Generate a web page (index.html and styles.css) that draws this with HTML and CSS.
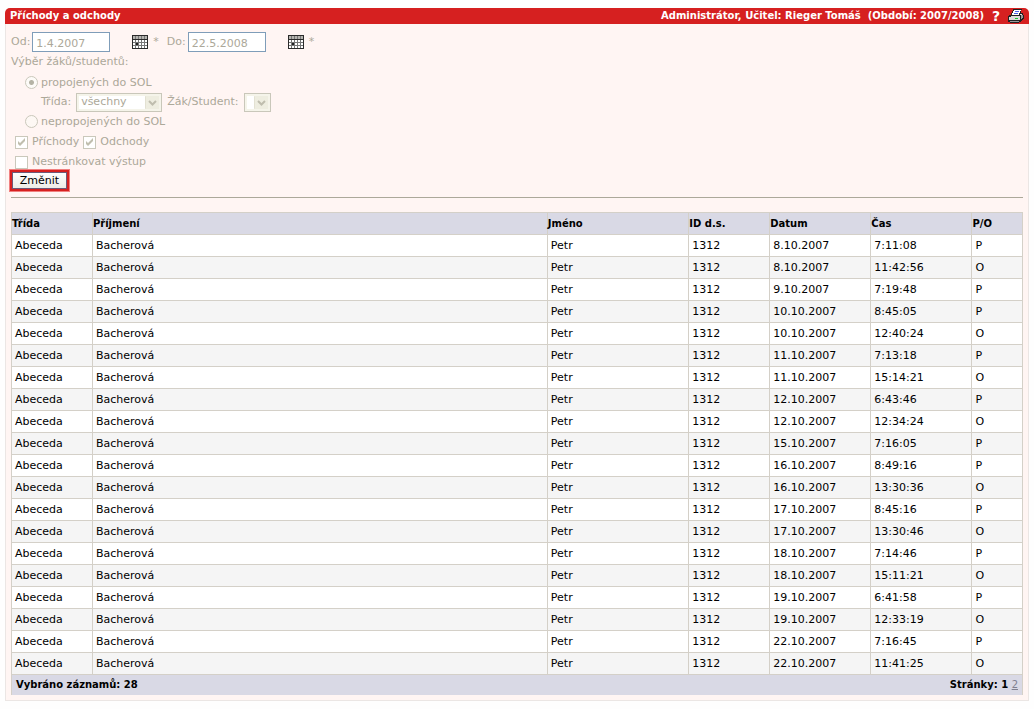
FILE: index.html
```html
<!DOCTYPE html>
<html lang="cs">
<head>
<meta charset="utf-8">
<title>Příchody a odchody</title>
<link rel="stylesheet" href="styles.css">
</head>
<body>
<main class="panel">
  <header class="bar">
    <h1 class="bar-title">Příchody a odchody</h1>
    <span>Administrátor, Učitel: Rieger Tomáš&nbsp; (Období: 2007/2008)</span>
    <button type="button" class="icon-button help" aria-label="Nápověda">?</button>
    <button type="button" class="icon-button" aria-label="Tisk">
      <svg width="16" height="14" viewBox="0 0 16 14" shape-rendering="crispEdges">
        <path d="M5 0h9v1h-1v3h2v2h1v4h-1v1h-1v1h-1v1h-2v1H2v-1H0V7h1V6h2V4h1V2h1z" fill="#222"/>
        <path d="M6 1h7v1h-1v2h-1v2H4V4h1V2h1z" fill="#fff"/>
        <path d="M7 2h4v1H7zM6 4h4v1H6z" fill="#4a62e8"/>
        <path d="M3 7h9v1H3zM1 8h11v3H1zM12 5h2v1h-2z" fill="#dcdcdc"/>
        <path d="M13 6h2v3h-1v1h-1zM2 12h9v1H2z" fill="#999"/>
        <path d="M7 9h3v1H7z" fill="#12d030"/>
      </svg>
    </button>
  </header>
  <div class="content">
    <form class="filter">
      <div class="line dates">
        <label for="from">Od:</label>
        <input class="date" id="from" type="text" value="1.4.2007" disabled>
        <button type="button" class="calendar" aria-label="Kalendář od" disabled>
          <svg width="16" height="14" viewBox="0 0 16 14" shape-rendering="crispEdges">
            <path d="M0 0h16v14H0z" fill="#2b2b2b"/>
            <path d="M1 1h14v3H1z" fill="#b5b5b0"/>
            <path d="M1 5h2v2H1zM4 5h2v2H4zM7 5h2v2H7zM10 5h2v2h-2zM13 5h2v2h-2zM1 8h2v2H1zM7 8h2v2H7zM10 8h2v2h-2zM13 8h2v2h-2zM1 11h2v2H1zM4 11h2v2H4zM7 11h2v2H7zM10 11h2v2h-2zM13 11h2v2h-2z" fill="#fff"/>
            <path d="M3 1h1v3H3zM6 1h1v3H6zM9 1h1v3H9zM12 1h1v3h-1z" fill="#777"/>
            <path d="M3 5h1v8H3zM6 5h1v8H6zM9 5h1v8H9zM12 5h1v8h-1zM1 7h14v1H1zM1 10h14v1H1z" fill="#777"/>
            <path d="M4 8h2v2H4z" fill="#222"/>
          </svg>
        </button>
        <span class="required">*</span>
        <label for="to">Do:</label>
        <input class="date" id="to" type="text" value="22.5.2008" disabled>
        <button type="button" class="calendar" aria-label="Kalendář do" disabled>
          <svg width="16" height="14" viewBox="0 0 16 14" shape-rendering="crispEdges">
            <path d="M0 0h16v14H0z" fill="#2b2b2b"/>
            <path d="M1 1h14v3H1z" fill="#b5b5b0"/>
            <path d="M1 5h2v2H1zM4 5h2v2H4zM7 5h2v2H7zM10 5h2v2h-2zM13 5h2v2h-2zM1 8h2v2H1zM7 8h2v2H7zM10 8h2v2h-2zM13 8h2v2h-2zM1 11h2v2H1zM4 11h2v2H4zM7 11h2v2H7zM10 11h2v2h-2zM13 11h2v2h-2z" fill="#fff"/>
            <path d="M3 1h1v3H3zM6 1h1v3H6zM9 1h1v3H9zM12 1h1v3h-1z" fill="#777"/>
            <path d="M3 5h1v8H3zM6 5h1v8H6zM9 5h1v8H9zM12 5h1v8h-1zM1 7h14v1H1zM1 10h14v1H1z" fill="#777"/>
            <path d="M4 8h2v2H4z" fill="#222"/>
          </svg>
        </button>
        <span class="required">*</span>
      </div>
      <div class="line">Výběr žáků/studentů:</div>
      <div class="line nested">
        <input class="radio" id="linked" type="radio" name="link" checked disabled>
        <label for="linked">propojených do SOL</label>
      </div>
      <div class="line selects">
        <label for="class">Třída:</label>
        <select class="drop wide" id="class" disabled><option>všechny</option></select>
        <label for="student">Žák/Student:</label>
        <select class="drop narrow" id="student" disabled><option></option></select>
      </div>
      <div class="line nested">
        <input class="radio" id="unlinked" type="radio" name="link" disabled>
        <label for="unlinked">nepropojených do SOL</label>
      </div>
      <div class="line checks">
        <input class="check" id="arrivals" type="checkbox" checked disabled>
        <label for="arrivals">Příchody</label>
        <input class="check" id="departures" type="checkbox" checked disabled>
        <label for="departures">Odchody</label>
      </div>
      <div class="line checks">
        <input class="check" id="nopaging" type="checkbox" disabled>
        <label for="nopaging">Nestránkovat výstup</label>
      </div>
      <button class="change" type="button">Změnit</button>
    </form>
    <table class="records">
      <colgroup><col class="c-class"><col class="c-surname"><col class="c-name"><col class="c-id"><col class="c-date"><col class="c-time"><col class="c-dir"></colgroup>
      <thead><tr><th>Třída</th><th>Příjmení</th><th>Jméno</th><th>ID d.s.</th><th>Datum</th><th>Čas</th><th>P/O</th></tr></thead>
      <tbody>
        <tr><td>Abeceda</td><td>Bacherová</td><td>Petr</td><td>1312</td><td>8.10.2007</td><td>7:11:08</td><td>P</td></tr>
        <tr><td>Abeceda</td><td>Bacherová</td><td>Petr</td><td>1312</td><td>8.10.2007</td><td>11:42:56</td><td>O</td></tr>
        <tr><td>Abeceda</td><td>Bacherová</td><td>Petr</td><td>1312</td><td>9.10.2007</td><td>7:19:48</td><td>P</td></tr>
        <tr><td>Abeceda</td><td>Bacherová</td><td>Petr</td><td>1312</td><td>10.10.2007</td><td>8:45:05</td><td>P</td></tr>
        <tr><td>Abeceda</td><td>Bacherová</td><td>Petr</td><td>1312</td><td>10.10.2007</td><td>12:40:24</td><td>O</td></tr>
        <tr><td>Abeceda</td><td>Bacherová</td><td>Petr</td><td>1312</td><td>11.10.2007</td><td>7:13:18</td><td>P</td></tr>
        <tr><td>Abeceda</td><td>Bacherová</td><td>Petr</td><td>1312</td><td>11.10.2007</td><td>15:14:21</td><td>O</td></tr>
        <tr><td>Abeceda</td><td>Bacherová</td><td>Petr</td><td>1312</td><td>12.10.2007</td><td>6:43:46</td><td>P</td></tr>
        <tr><td>Abeceda</td><td>Bacherová</td><td>Petr</td><td>1312</td><td>12.10.2007</td><td>12:34:24</td><td>O</td></tr>
        <tr><td>Abeceda</td><td>Bacherová</td><td>Petr</td><td>1312</td><td>15.10.2007</td><td>7:16:05</td><td>P</td></tr>
        <tr><td>Abeceda</td><td>Bacherová</td><td>Petr</td><td>1312</td><td>16.10.2007</td><td>8:49:16</td><td>P</td></tr>
        <tr><td>Abeceda</td><td>Bacherová</td><td>Petr</td><td>1312</td><td>16.10.2007</td><td>13:30:36</td><td>O</td></tr>
        <tr><td>Abeceda</td><td>Bacherová</td><td>Petr</td><td>1312</td><td>17.10.2007</td><td>8:45:16</td><td>P</td></tr>
        <tr><td>Abeceda</td><td>Bacherová</td><td>Petr</td><td>1312</td><td>17.10.2007</td><td>13:30:46</td><td>O</td></tr>
        <tr><td>Abeceda</td><td>Bacherová</td><td>Petr</td><td>1312</td><td>18.10.2007</td><td>7:14:46</td><td>P</td></tr>
        <tr><td>Abeceda</td><td>Bacherová</td><td>Petr</td><td>1312</td><td>18.10.2007</td><td>15:11:21</td><td>O</td></tr>
        <tr><td>Abeceda</td><td>Bacherová</td><td>Petr</td><td>1312</td><td>19.10.2007</td><td>6:41:58</td><td>P</td></tr>
        <tr><td>Abeceda</td><td>Bacherová</td><td>Petr</td><td>1312</td><td>19.10.2007</td><td>12:33:19</td><td>O</td></tr>
        <tr><td>Abeceda</td><td>Bacherová</td><td>Petr</td><td>1312</td><td>22.10.2007</td><td>7:16:45</td><td>P</td></tr>
        <tr><td>Abeceda</td><td>Bacherová</td><td>Petr</td><td>1312</td><td>22.10.2007</td><td>11:41:25</td><td>O</td></tr>
      </tbody>
    </table>
    <div class="summary">
      <span>Vybráno záznamů: 28</span>
      <span>Stránky: 1 <a class="page-link" href="#2">2</a></span>
    </div>
  </div>
</main>
</body>
</html>
```
FILE: styles.css
```css
* { box-sizing: border-box; }

body {
  margin: 8px 5px;
  background: #fefefe;
  color: #000;
  font: 11px/16px Verdana, "DejaVu Sans", sans-serif;
}

input, select, button { font: inherit; margin: 0; }

.bar {
  display: flex;
  align-items: center;
  height: 16px;
  padding: 0 5px;
  border-radius: 5px 5px 0 0;
  background: #d62020;
  color: #fff;
  font-size: 10px;
  line-height: 18px;
  font-weight: bold;
}

.bar-title { flex: 1; margin: 0; font-size: inherit; }

.icon-button {
  display: flex;
  align-items: center;
  justify-content: center;
  width: 16px;
  height: 16px;
  margin-left: 4px;
  padding: 0;
  border: 0;
  background: none;
  color: #fff;
}

.help { font-size: 14px; font-weight: bold; }

.content {
  padding: 8px 5px 5px;
  border: 1px solid #ebe6e4;
  border-top: 0;
  background: #fff5f3;
}

.filter {
  margin-bottom: 14px;
  border-bottom: 1px solid #aca899;
  padding-bottom: 5px;
  color: #aca899;
}

.line { display: flex; align-items: center; height: 20px; }

.date {
  width: 78px;
  height: 20px;
  margin-left: 2px;
  padding: 3px 3px 0;
  border: 1px solid #7f9db9;
  background: #fff;
  color: #aca899;
}

.calendar {
  display: flex;
  margin-left: 22px;
  padding: 0;
  border: 0;
  background: none;
}

.required { margin: 0 8px 0 5px; }

.nested { padding-left: 14px; gap: 3px; height: 21px; }

.selects { padding-left: 30px; gap: 5px; height: 18px; }

.radio, .check {
  appearance: none;
  flex: none;
  width: 13px;
  height: 13px;
  border: 1px solid #cac8bb;
  background: #fff;
}

.radio { border-radius: 50%; background: #fdf8f4; }

.radio:checked { background: radial-gradient(circle, #b5b3a5 0 2px, #fdfbf8 3px); }

.checks { padding-left: 4px; gap: 4px; }

.check:checked {
  background: #fff url("data:image/svg+xml,%3Csvg xmlns='http://www.w3.org/2000/svg' viewBox='0 0 11 11'%3E%3Cpath d='M2 4v3l2 2 5-5V1L4 6z' fill='%23c0beae'/%3E%3C/svg%3E") center / 11px no-repeat;
}

.drop {
  appearance: none;
  height: 19px;
  padding: 0 4px;
  border: 1px solid #c9c7ba;
  border-radius: 0;
  box-shadow: inset 0 0 0 2px #f5f4ea;
  background: #fff url("data:image/svg+xml,%3Csvg xmlns='http://www.w3.org/2000/svg' viewBox='0 0 17 17'%3E%3Crect x='1.5' y='1.5' width='14' height='14' rx='1' fill='%23eeede0' stroke='%23e3e1d2'/%3E%3Cpath d='M5 7l3.500 3.500L12 7' fill='none' stroke='%23bfbdae' stroke-width='2'/%3E%3C/svg%3E") right center / 17px no-repeat;
  color: #aca899;
  opacity: 1;
}

.wide { width: 86px; }

.narrow { width: 27px; }

.change {
  display: block;
  width: 61px;
  height: 23px;
  margin: -3px 0 0 -2px;
  padding: 0;
  border: 3px solid #d62020;
  outline: 1px solid #f08080;
  outline-offset: -1px;
  box-shadow: inset 0 0 0 1px #6b5a78;
  background: linear-gradient(#fff, #ecebe5);
  color: #000;
}

.records {
  width: 100%;
  table-layout: fixed;
  border-collapse: collapse;
  background: #fff;
}

.c-class, .c-id { width: 8%; }
.c-surname { width: 45%; }
.c-name { width: 14%; }
.c-date, .c-time { width: 10%; }
.c-dir { width: 5%; }

.records th, .records td {
  height: 22px;
  padding: 0 3px;
  border: 1px solid #d4d0c8;
  text-align: left;
}

.records th { padding: 0; background: #d9d9e5; font-size: 10px; }

.records tbody tr:nth-child(even) { background: #f5f5f5; }

.summary {
  display: flex;
  justify-content: space-between;
  padding: 2px 4px;
  border: solid #d4d0c8;
  border-width: 0 1px;
  background: #d9d9e5;
  font-size: 10px;
  font-weight: bold;
}

.page-link { color: #808090; font-weight: normal; }
```
